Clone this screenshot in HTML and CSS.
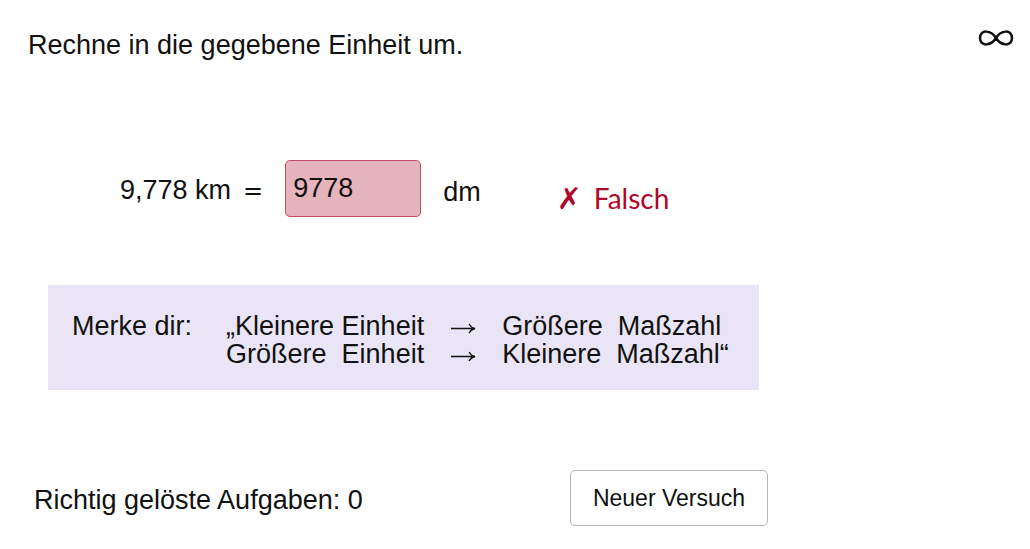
FILE: index.html
```html
<!DOCTYPE html>
<html lang="de">
<head>
<meta charset="utf-8">
<link rel="stylesheet" href="styles.css">
</head>
<body>
<div class="page">
  <header class="header">
    <h1 class="title">Rechne in die gegebene Einheit um.</h1>
    <svg class="infinity" width="38" height="22" viewBox="0 0 38 22" aria-label="unendlich">
      <path d="M19 11 C 14 3, 3 2, 3 11 C 3 20, 14 19, 19 11 C 24 3, 35 2, 35 11 C 35 20, 24 19, 19 11 Z" fill="none" stroke="#111" stroke-width="2.5"/>
    </svg>
  </header>
  <section class="task">
    <span class="given">9,778 km<span class="eq">=</span></span>
    <div class="answer">9778</div>
    <span class="unit">dm</span>
    <span class="feedback"><span class="cross">✗</span>Falsch</span>
  </section>
  <section class="hint">
    <span class="hint-label">Merke dir:</span>
    <div class="hint-grid">
      <span class="c1">„Kleinere Einheit</span>
      <svg class="arrow" width="26" height="12" viewBox="0 0 26 12"><path d="M1 6.5 H24 M19 2 C 20.5 4.5, 22.5 6, 25 6.5 C 22.5 7, 20.5 8.5, 19 11" fill="none" stroke="#111" stroke-width="1.3"/></svg>
      <span class="c3">Größere&nbsp;&nbsp;Maßzahl</span>
      <span class="c1">Größere&nbsp;&nbsp;Einheit</span>
      <svg class="arrow" width="26" height="12" viewBox="0 0 26 12"><path d="M1 6.5 H24 M19 2 C 20.5 4.5, 22.5 6, 25 6.5 C 22.5 7, 20.5 8.5, 19 11" fill="none" stroke="#111" stroke-width="1.3"/></svg>
      <span class="c3">Kleinere&nbsp;&nbsp;Maßzahl“</span>
    </div>
  </section>
  <footer class="footer">
    <span class="score">Richtig gelöste Aufgaben: 0</span>
    <button class="retry">Neuer Versuch</button>
  </footer>
</div>
</body>
</html>
```
FILE: styles.css
```css
html, body {
  margin: 0;
  padding: 0;
  background: #fff;
}
body {
  font-family: "Liberation Sans", Arial, sans-serif;
  color: #111;
  width: 1030px;
  height: 549px;
  overflow: hidden;
}
.page {
  display: flex;
  flex-direction: column;
}
.header {
  display: flex;
  justify-content: space-between;
  align-items: flex-start;
  padding: 28px 15px 0 28px;
}
.title {
  margin: 0;
  font-weight: normal;
  font-size: 27px;
  line-height: 34px;
}
.infinity {
  margin-top: -1px;
}
.task {
  display: flex;
  align-items: center;
  margin-top: 98px;
  padding-left: 120px;
  font-size: 27px;
  height: 57px;
}
.given {
  margin-top: 4px;
}
.eq {
  font-family: "DejaVu Sans", sans-serif;
  font-size: 24px;
  margin-left: 12px;
}
.answer {
  box-sizing: border-box;
  width: 136px;
  height: 57px;
  margin-left: 22px;
  padding: 12px 0 0 7px;
  background: #e6b4bd;
  border: 1px solid #c44b63;
  border-radius: 5px;
  line-height: 30px;
}
.unit {
  margin-left: 22px;
  margin-top: 8px;
}
.feedback {
  display: flex;
  align-items: baseline;
  margin-left: 76px;
  margin-top: 20px;
  color: #b0062b;
  font-family: Lato, sans-serif;
  font-size: 28px;
}
.cross {
  font-family: "DejaVu Sans", sans-serif;
  font-weight: bold;
  font-size: 30px;
  margin-right: 12px;
}
.hint {
  display: flex;
  align-items: flex-start;
  margin: 68px 0 0 48px;
  width: 711px;
  height: 105px;
  box-sizing: border-box;
  padding: 27px 0 0 24px;
  background: #e9e5f6;
  font-size: 27px;
  line-height: 28px;
}
.hint-grid {
  display: grid;
  grid-template-columns: auto auto auto;
  align-items: center;
  column-gap: 26px;
  margin-left: 34px;
}
.hint-grid .c1 {
  text-align: right;
}
.arrow {
  display: block;
  margin-top: 3px;
}
.footer {
  display: flex;
  align-items: center;
  margin-top: 80px;
  padding-left: 34px;
}
.score {
  font-size: 27px;
  width: 536px;
  margin-top: 4px;
}
.retry {
  box-sizing: border-box;
  width: 198px;
  height: 56px;
  background: #fff;
  border: 1px solid #b5b5b5;
  border-radius: 5px;
  font-family: "Liberation Sans", Arial, sans-serif;
  font-size: 23px;
  color: #111;
  padding: 0;
}
```
